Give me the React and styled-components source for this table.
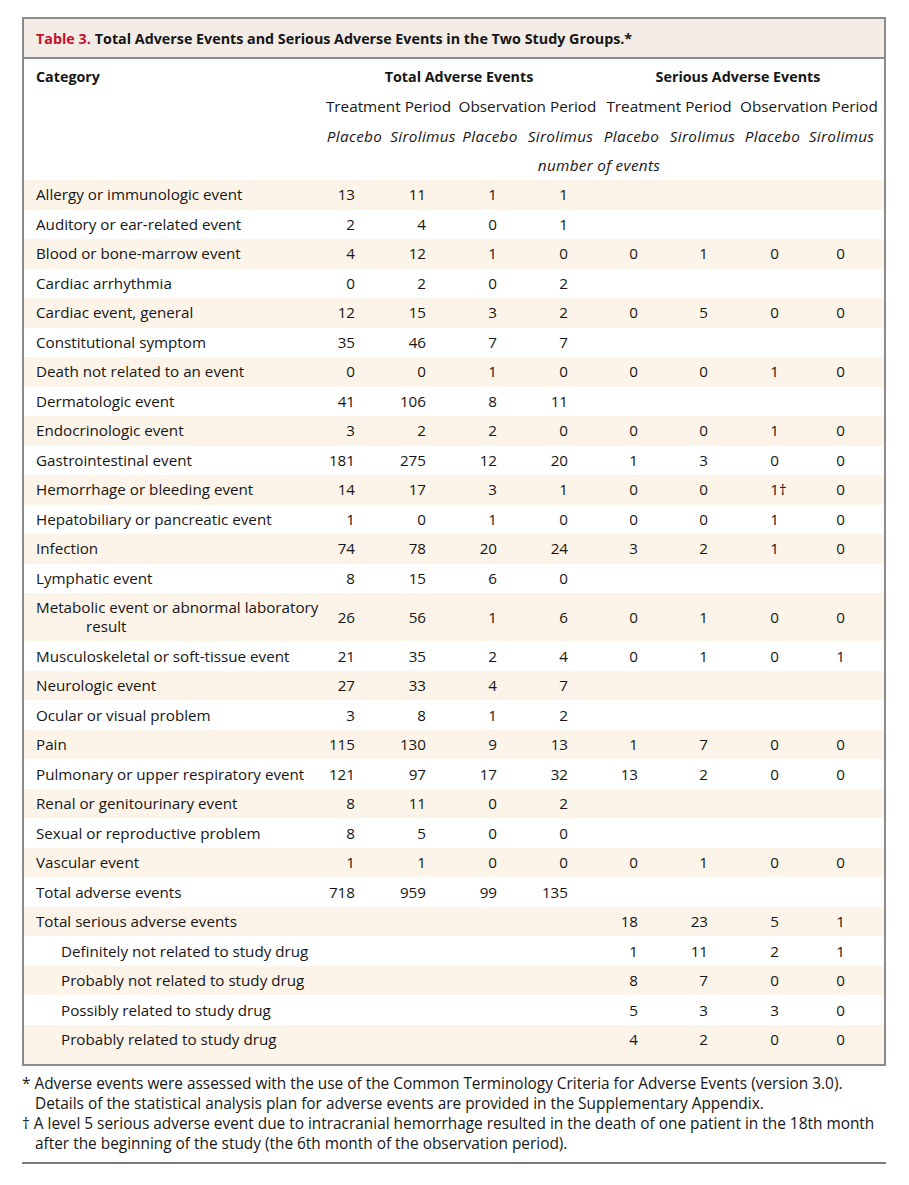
import React from "react"
import styled, { createGlobalStyle, css } from "styled-components"

const GlobalStyle = createGlobalStyle`
  body {
    margin: 0;
    background: #fff;
    color: #161616;
    font-family: "Open Sans", "Lato", sans-serif;
  }
`

const COLUMNS = "296px 69px 68px 66px 75px 67px 75px 65px 73px"
const NUM_PAD = [34, 31, 26, 30, 27, 32, 26, 33]

const Page = styled.div`
  width: 864px;
  padding: 17px 0 0 22px;
`

const TableBox = styled.div`
  border: 2px solid #8b8b8b;
`

const TitleBar = styled.div`
  height: 38px;
  display: flex;
  align-items: center;
  padding-left: 12px;
  background: #f3ece6;
  border-bottom: 2px solid #8b8b8b;
  font-size: 14.3px;
  font-weight: 700;
  white-space: nowrap;
`

const TitleLabel = styled.span`
  color: #c8102e;
  margin-right: 4px;
`

const Head = styled.div`
  display: grid;
  grid-template-columns: ${COLUMNS};
  grid-auto-rows: 29.5px;
  padding-top: 3px;
  font-size: 15.3px;
`

const HeadCell = styled.div`
  display: flex;
  align-items: center;
  justify-content: center;
  white-space: nowrap;
  grid-column: ${({ $span }) => $span || "auto"};
  ${({ $bold }) =>
    $bold &&
    css`
      font-weight: 700;
      font-size: 14.3px;
    `}
  ${({ $italic }) =>
    $italic &&
    css`
      font-style: italic;
      letter-spacing: 0.3px;
    `}
  ${({ $left }) =>
    $left &&
    css`
      justify-content: flex-start;
      padding-left: 12px;
    `}
`

const Row = styled.div`
  display: grid;
  grid-template-columns: ${COLUMNS};
  min-height: 29.5px;
  padding: 5px 0;
  box-sizing: border-box;
  align-items: center;
  font-size: 15.2px;
  line-height: 19.2px;
  background: ${({ $striped }) => ($striped ? "#fdf4e9" : "#fff")};
  ${({ $last }) =>
    $last &&
    css`
      padding-bottom: 15px;
    `}
`

const Category = styled.div`
  padding-left: ${({ $indent }) => ($indent ? 37 : 12)}px;
  white-space: nowrap;
`

const Wrap = styled.div`
  padding-left: 50px;
`

const Num = styled.div`
  text-align: right;
  padding-right: ${({ $col }) => NUM_PAD[$col]}px;
  white-space: nowrap;
`

const Dagger = styled.span`
  display: inline-block;
  width: 8px;
  margin-right: -8px;
  text-align: left;
`

const Notes = styled.div`
  padding-top: 8px;
  font-size: 15.4px;
  line-height: 19.8px;
  white-space: nowrap;
`

const Note = styled.p`
  margin: 0;
  padding-left: 13px;
  text-indent: -13px;
`

const Rule = styled.div`
  margin-top: 9px;
  border-top: 2px solid #7a7a7a;
`

const rows = [
  ["Allergy or immunologic event", 13, 11, 1, 1],
  ["Auditory or ear-related event", 2, 4, 0, 1],
  ["Blood or bone-marrow event", 4, 12, 1, 0, 0, 1, 0, 0],
  ["Cardiac arrhythmia", 0, 2, 0, 2],
  ["Cardiac event, general", 12, 15, 3, 2, 0, 5, 0, 0],
  ["Constitutional symptom", 35, 46, 7, 7],
  ["Death not related to an event", 0, 0, 1, 0, 0, 0, 1, 0],
  ["Dermatologic event", 41, 106, 8, 11],
  ["Endocrinologic event", 3, 2, 2, 0, 0, 0, 1, 0],
  ["Gastrointestinal event", 181, 275, 12, 20, 1, 3, 0, 0],
  ["Hemorrhage or bleeding event", 14, 17, 3, 1, 0, 0, "1†", 0],
  ["Hepatobiliary or pancreatic event", 1, 0, 1, 0, 0, 0, 1, 0],
  ["Infection", 74, 78, 20, 24, 3, 2, 1, 0],
  ["Lymphatic event", 8, 15, 6, 0],
  ["Metabolic event or abnormal laboratory|result", 26, 56, 1, 6, 0, 1, 0, 0],
  ["Musculoskeletal or soft-tissue event", 21, 35, 2, 4, 0, 1, 0, 1],
  ["Neurologic event", 27, 33, 4, 7],
  ["Ocular or visual problem", 3, 8, 1, 2],
  ["Pain", 115, 130, 9, 13, 1, 7, 0, 0],
  ["Pulmonary or upper respiratory event", 121, 97, 17, 32, 13, 2, 0, 0],
  ["Renal or genitourinary event", 8, 11, 0, 2],
  ["Sexual or reproductive problem", 8, 5, 0, 0],
  ["Vascular event", 1, 1, 0, 0, 0, 1, 0, 0],
  ["Total adverse events", 718, 959, 99, 135],
  ["Total serious adverse events", "", "", "", "", 18, 23, 5, 1],
  [">Definitely not related to study drug", "", "", "", "", 1, 11, 2, 1],
  [">Probably not related to study drug", "", "", "", "", 8, 7, 0, 0],
  [">Possibly related to study drug", "", "", "", "", 5, 3, 3, 0],
  [">Probably related to study drug", "", "", "", "", 4, 2, 0, 0],
]

const groups = ["Placebo", "Sirolimus", "Placebo", "Sirolimus", "Placebo", "Sirolimus", "Placebo", "Sirolimus"]

const renderValue = value => {
  if (typeof value === "string" && value.endsWith("†")) {
    return (
      <>
        {value.slice(0, -1)}
        <Dagger>†</Dagger>
      </>
    )
  }
  return value
}

const renderLabel = label => {
  const indent = label.startsWith(">")
  const text = indent ? label.slice(1) : label
  const [first, rest] = text.split("|")
  return (
    <Category $indent={indent}>
      {first}
      {rest && <Wrap>{rest}</Wrap>}
    </Category>
  )
}

export default function App() {
  return (
    <Page>
      <GlobalStyle />
      <TableBox>
        <TitleBar>
          <TitleLabel>Table 3.</TitleLabel>
          Total Adverse Events and Serious Adverse Events in the Two Study Groups.*
        </TitleBar>
        <Head>
          <HeadCell $bold $left>Category</HeadCell>
          <HeadCell $bold $span="2 / 6">Total Adverse Events</HeadCell>
          <HeadCell $bold $span="6 / 10">Serious Adverse Events</HeadCell>
          <HeadCell $span="2 / 4">Treatment Period</HeadCell>
          <HeadCell $span="4 / 6">Observation Period</HeadCell>
          <HeadCell $span="6 / 8">Treatment Period</HeadCell>
          <HeadCell $span="8 / 10">Observation Period</HeadCell>
          {groups.map((g, i) => (
            <HeadCell key={`g${i}`} $italic $span={`${i + 2} / ${i + 3}`}>
              {g}
            </HeadCell>
          ))}
          <HeadCell $italic $span="2 / 10">number of events</HeadCell>
        </Head>
        {rows.map(([label, ...values], i) => (
          <Row key={label} $striped={i % 2 === 0} $last={i === rows.length - 1}>
            {renderLabel(label)}
            {Array.from({ length: 8 }).map((_, c) => (
              <Num key={c} $col={c}>
                {values[c] !== undefined ? renderValue(values[c]) : ""}
              </Num>
            ))}
          </Row>
        ))}
      </TableBox>
      <Notes>
        <Note>
          * Adverse events were assessed with the use of the Common Terminology Criteria for Adverse Events (version 3.0).
          <br />
          Details of the statistical analysis plan for adverse events are provided in the Supplementary Appendix.
        </Note>
        <Note>
          † A level 5 serious adverse event due to intracranial hemorrhage resulted in the death of one patient in the 18th month
          <br />
          after the beginning of the study (the 6th month of the observation period).
        </Note>
      </Notes>
      <Rule />
    </Page>
  )
}
